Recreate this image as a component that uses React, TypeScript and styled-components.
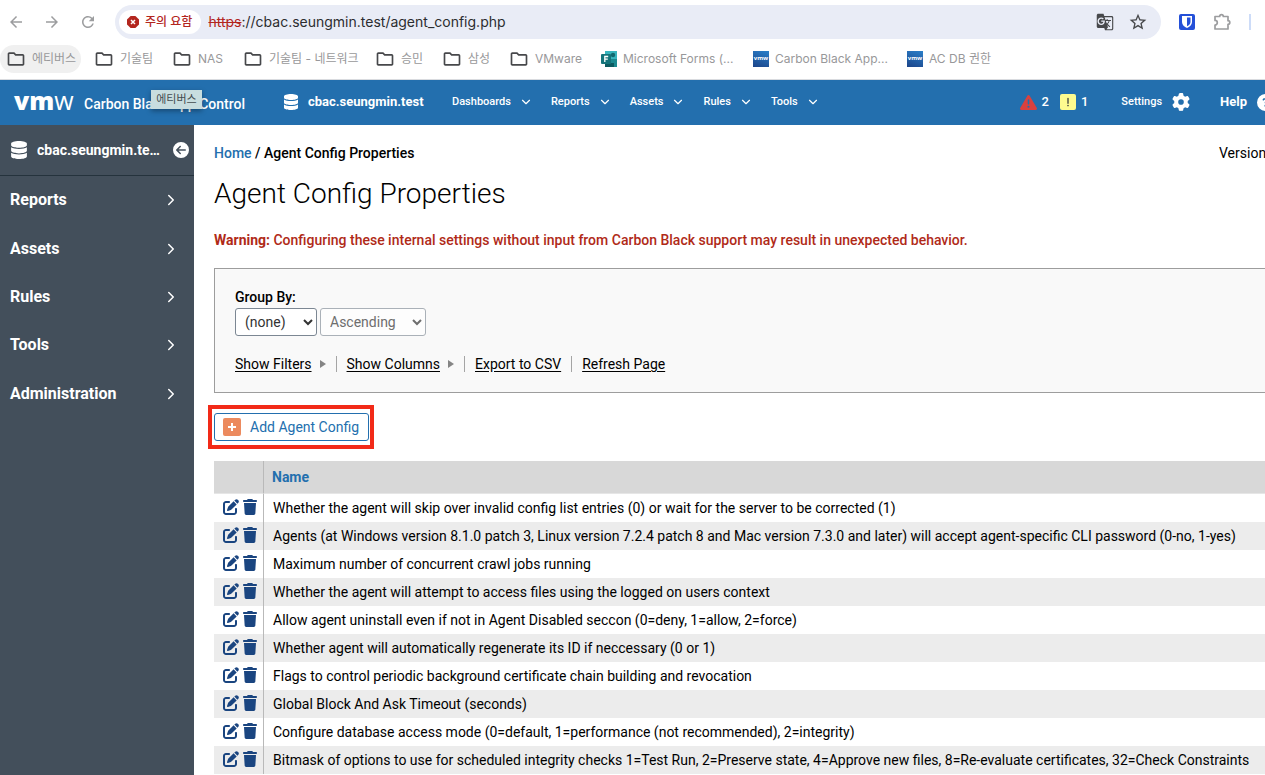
import React from 'react';
import styled, { createGlobalStyle, css } from 'styled-components';
import {
  MdArrowBack, MdArrowForward, MdRefresh, MdGTranslate, MdStarBorder,
  MdOutlineFolder,
} from 'react-icons/md';
import { FaDatabase } from 'react-icons/fa';
import {
  FaTriangleExclamation, FaGear, FaCircleQuestion, FaCircleArrowLeft,
  FaPenToSquare, FaTrash, FaExclamation,
} from 'react-icons/fa6';
import { ChevronDown, ChevronRight } from 'lucide-react';

const uiFont = `Inter, "Noto Sans CJK KR", sans-serif`;
const pageFont = `Roboto, "Noto Sans CJK KR", sans-serif`;

const GlobalStyle = createGlobalStyle`
  * { box-sizing: border-box; }
  html, body, #root { height: 100%; }
  body { margin: 0; background: #fff; color: #000; font: 14px/20px ${pageFont}; overflow: hidden; }
  a { color: inherit; text-decoration: none; }
  button, select, input { font: inherit; }
  svg { display: block; flex: none; }
`;

const Page = styled.div`
  height: 100%;
  display: flex;
  flex-direction: column;
`;

/* ---------- browser chrome ---------- */

const Toolbar = styled.div`
  display: flex;
  align-items: center;
  flex: none;
  height: 44px;
  padding: 0 14px 0 7px;
  gap: 18px;
  color: #9c9d9f;
`;

const ToolButton = styled.button`
  display: flex;
  padding: 0;
  border: 0;
  background: none;
  color: inherit;
`;

const AddressBar = styled.div`
  flex: 1;
  display: flex;
  align-items: center;
  height: 34px;
  padding: 0 13px 0 4px;
  border-radius: 17px;
  background: #e9ecf6;
  color: #47484b;
`;

const SecurityChip = styled.button`
  display: flex;
  align-items: center;
  gap: 6px;
  height: 24px;
  padding: 0 9px 0 8px;
  border: 0;
  border-radius: 12px;
  background: #fff;
  color: #b3261e;
  font: 500 12px/24px ${uiFont};
`;

const UrlField = styled.div`
  flex: 1;
  margin-left: 7px;
  color: #2c2d30;
  font: 14px/20px ${uiFont};
  s { color: #b3261e; }
`;

const AddressActions = styled.div`
  display: flex;
  align-items: center;
  gap: 14px;
`;

const ToolDivider = styled.span`
  width: 2px;
  height: 16px;
  background: #cddcf8;
`;

const BookmarkBar = styled.nav`
  display: flex;
  flex: none;
  height: 36px;
  padding-top: 1px;
  border-bottom: 1px solid #d9dbdf;
`;

const Bookmark = styled.a<{ $active?: boolean; $width: number }>`
  display: flex;
  align-items: center;
  flex: none;
  gap: 6px;
  width: ${p => p.$width}px;
  height: 28px;
  margin-right: 7px;
  padding-left: 6px;
  border-radius: 14px;
  white-space: nowrap;
  color: #98989a;
  font: 12px/28px ${uiFont};
  background: ${p => (p.$active ? '#f0f0f0' : 'none')};
  svg { color: #47484b; }
`;

const VmwTile = styled.span`
  width: 16px;
  height: 16px;
  flex: none;
  background: linear-gradient(200deg, #2a7fc9, #1c4489);
  color: #fff;
  font: 700 6px/15px "Open Sans", sans-serif;
  text-align: center;
`;

/* ---------- application header ---------- */

const Header = styled.header`
  position: relative;
  display: flex;
  align-items: center;
  height: 45px;
  flex: none;
  padding: 0 0 1px 14px;
  background: #236fae;
  color: #fff;
  white-space: nowrap;
`;

const Logo = styled.span`
  width: 70px;
  padding-bottom: 4px;
  font: 800 25px/30px "Open Sans", sans-serif;
  span { font-weight: 400; }
`;

const Product = styled.span`
  width: 199px;
  padding-top: 4px;
  font-weight: 500;
`;

const Tooltip = styled.div`
  position: absolute;
  left: 151px;
  top: 10px;
  width: 51px;
  height: 19px;
  background: #c8dddf;
  box-shadow: 0 2px 5px rgba(0, 0, 0, 0.35);
  color: #444c4f;
  font: 11px/18px ${uiFont};
  text-align: center;
`;

const Server = styled.span`
  display: flex;
  align-items: center;
  gap: 9px;
  width: 169px;
  font-size: 13px;
  font-weight: 700;
`;

const MainNav = styled.nav`
  display: flex;
  flex: 1;
  gap: 18px;
`;

const NavLink = styled.a`
  display: flex;
  align-items: center;
  gap: 8px;
  font-size: 11px;
  font-weight: 500;
`;

const Alerts = styled.div`
  display: flex;
  align-items: center;
  gap: 5px;
  font-weight: 500;
  font-size: 13px;
`;

const Notice = styled.span`
  display: flex;
  align-items: center;
  justify-content: center;
  width: 16px;
  height: 16px;
  margin-left: 6px;
  border-radius: 2px;
  background: #fdfb8f;
  color: #34383c;
`;

const Settings = styled.a`
  display: flex;
  align-items: center;
  gap: 10px;
  margin-left: 33px;
  font-size: 11px;
  font-weight: 500;
`;

const Help = styled.a`
  display: flex;
  align-items: center;
  gap: 10px;
  margin: 0 -9px 0 30px;
  font-size: 13px;
  font-weight: 700;
`;

/* ---------- body ---------- */

const Body = styled.div`
  flex: 1;
  min-height: 0;
  display: flex;
`;

const Sidebar = styled.aside`
  flex: none;
  width: 194px;
  background: #434f5b;
  color: #fff;
`;

const SideHead = styled.div`
  display: flex;
  align-items: center;
  gap: 9px;
  height: 51px;
  padding: 0 5px 1px 10px;
  border-bottom: 1px solid #25333d;
  font-weight: 700;
`;

const SideName = styled.span`
  flex: 1;
  min-width: 0;
  margin-right: 4px;
  overflow: hidden;
  text-overflow: ellipsis;
  white-space: nowrap;
`;

const SideMenu = styled.nav`
  display: grid;
  grid-template-rows: repeat(5, 1fr);
  height: 242px;
`;

const SideLink = styled.a`
  display: flex;
  align-items: center;
  justify-content: space-between;
  padding: 0 14px 0 10px;
  font-size: 16px;
  font-weight: 700;
`;

const Content = styled.main`
  flex: 1;
  min-width: 0;
  padding: 18px 0 0 20px;
  overflow: hidden;
`;

const Crumbs = styled.div`
  display: flex;
  justify-content: space-between;
  font-weight: 500;
  a { color: #236fae; }
`;

const Version = styled.span`
  width: 46px;
  font-weight: 400;
  white-space: nowrap;
`;

const Title = styled.h1`
  margin: 13px 0 0;
  font-size: 28px;
  line-height: 36px;
  font-weight: 300;
`;

const Warning = styled.p`
  margin: 18px 0;
  color: #b02a18;
  font-weight: 500;
  b { font-weight: 700; }
`;

const Filters = styled.section`
  height: 125px;
  padding: 18px 20px 0;
  border: 1px solid #9d9d9d;
  border-right: 0;
  background: #f9f9f9;
`;

const GroupLabel = styled.label`
  display: block;
  padding-bottom: 1px;
  font-weight: 500;
`;

const SelectRow = styled.div`
  display: flex;
  gap: 3px;
`;

const Select = styled.select<{ $width: number }>`
  width: ${p => p.$width}px;
  height: 28px;
  padding: 0 0 0 5px;
  border: 1px solid #7c8793;
  border-radius: 3px;
  background: #fff;
  color: #333;
  &:disabled { opacity: 1; color: #6e6e6e; border-color: #aab1b8; background: #fdfdfd; }
`;

const Actions = styled.div`
  display: flex;
  align-items: center;
  margin-top: 18px;
  a + a::before {
    content: '';
    width: 1px;
    height: 16px;
    margin: 0 10px;
    background: #a5a5a5;
  }
`;

const ActionLink = styled.a<{ $expand?: boolean }>`
  display: flex;
  align-items: center;
  span { text-decoration: underline; text-underline-offset: 2px; }
  ${p => p.$expand && css`
    &::after {
      content: '';
      margin-left: 8px;
      border: 4px solid transparent;
      border-left: 6px solid #858585;
      border-right: 0;
    }
  `}
`;

const Highlight = styled.div`
  width: max-content;
  margin: 12px 0 12px -6px;
  padding: 4px 1px 4px 2px;
  border: 4px solid #f22a18;
`;

const AddButton = styled.button`
  display: flex;
  align-items: center;
  gap: 9px;
  height: 28px;
  padding: 0 9px 0 8px;
  border: 1px solid #236fae;
  border-radius: 3px;
  background: #fff;
  color: #236fae;
`;

const Table = styled.table`
  width: 100%;
  border-collapse: separate;
  border-spacing: 0;
  th, td { padding: 0 0 0 9px; text-align: left; white-space: nowrap; }
  th:first-child, td:first-child { width: 50px; border-right: 1px solid #b9b9b9; }
  th { height: 33px; padding-left: 8px; background: #d8d8d8; border-bottom: 1px solid #e6e6e6; color: #236fae; font-weight: 700; }
  td { height: 28px; }
  tbody tr:nth-child(even) { background: #ececec; }
`;

const RowTools = styled.div`
  display: flex;
  align-items: center;
  gap: 3px;
  padding-bottom: 2px;
`;

const RowButton = styled.button`
  display: flex;
  padding: 0;
  border: 0;
  background: none;
  color: #1a4580;
`;

const PlusIcon = () => (
  <svg width="18" height="18" viewBox="0 0 18 18">
    <rect width="18" height="18" rx="2" fill="#ec8a5e" />
    <path d="M9 5v8M5 9h8" stroke="#fff" strokeWidth="2" />
  </svg>
);

const FormsIcon = () => (
  <svg width="16" height="16" viewBox="0 0 16 16">
    <path fill="#37b5bd" d="M4 0h12v9H4z" />
    <path fill="#1b8a90" d="M10 8h6v8h-6z" />
    <path fill="#0c5a60" d="M4 12h9v4H4z" />
    <circle cx="12" cy="4" r="2.2" fill="#10696f" />
    <rect y="3" width="10" height="10" rx="1" fill="#14747a" />
    <path d="M3.8 11V5.5h3.4M3.8 8.2h3" stroke="#fff" strokeWidth="1.3" fill="none" />
  </svg>
);

const DangerIcon = () => (
  <svg width="12" height="12" viewBox="0 0 12 12">
    <path fill="#b3261e" d="M3.6 0h4.8L12 3.6v4.8L8.4 12H3.6L0 8.4V3.6z" />
    <path d="M4 4l4 4M8 4l-4 4" stroke="#fff" strokeWidth="1.5" />
  </svg>
);

const ShieldIcon = () => (
  <svg width="16" height="16" viewBox="0 0 16 16">
    <rect width="16" height="16" rx="2" fill="#2450d8" />
    <path fill="#fff" d="M3 2h10v6c0 3-2.4 4.8-5 6-2.600-1.200-5-3-5-6z" />
    <path fill="#2450d8" d="M8 3.500h3.500V8c0 2-1.500 3.300-3.500 4.300z" />
  </svg>
);

const PuzzleIcon = () => (
  <svg width="18" height="18" viewBox="0 0 18 18" fill="none" stroke="#9c9d9f" strokeWidth="1.7" strokeLinejoin="round">
    <path d="M2 3.500h4.700a1.800 1.800 0 0 1 3.600 0H15V7.700a1.800 1.800 0 0 1 0 3.600V16H2v-4a2.300 2.300 0 0 0 0-4.600z" />
  </svg>
);

type Mark = { label: string; width: number; icon?: 'forms' | 'vmw'; active?: boolean };

const bookmarks: Mark[] = [
  { label: '에티버스', width: 81, active: true },
  { label: '기술팀', width: 71 },
  { label: 'NAS', width: 64 },
  { label: '기술팀 - 네트워크', width: 125 },
  { label: '승민', width: 60 },
  { label: '삼성', width: 60 },
  { label: 'VMware', width: 85 },
  { label: 'Microsoft Forms (...', width: 145, icon: 'forms' },
  { label: 'Carbon Black App...', width: 147, icon: 'vmw' },
  { label: 'AC DB 권한', width: 96, icon: 'vmw' },
];

const topics = ['Dashboards', 'Reports', 'Assets', 'Rules', 'Tools'];
const sections = ['Reports', 'Assets', 'Rules', 'Tools', 'Administration'];

const configs = [
  'Whether the agent will skip over invalid config list entries (0) or wait for the server to be corrected (1)',
  'Agents (at Windows version 8.1.0 patch 3, Linux version 7.2.4 patch 8 and Mac version 7.3.0 and later) will accept agent-specific CLI password (0-no, 1-yes)',
  'Maximum number of concurrent crawl jobs running',
  'Whether the agent will attempt to access files using the logged on users context',
  'Allow agent uninstall even if not in Agent Disabled seccon (0=deny, 1=allow, 2=force)',
  'Whether agent will automatically regenerate its ID if neccessary (0 or 1)',
  'Flags to control periodic background certificate chain building and revocation',
  'Global Block And Ask Timeout (seconds)',
  'Configure database access mode (0=default, 1=performance (not recommended), 2=integrity)',
  'Bitmask of options to use for scheduled integrity checks 1=Test Run, 2=Preserve state, 4=Approve new files, 8=Re-evaluate certificates, 32=Check Constraints',
];

function BookmarkIcon({ kind }: { kind?: Mark['icon'] }) {
  if (kind === 'forms') return <FormsIcon />;
  if (kind === 'vmw') return <VmwTile>vmw</VmwTile>;
  return <MdOutlineFolder size={20} />;
}

export default function App() {
  return (
    <Page>
      <GlobalStyle />
      <Toolbar>
        <ToolButton aria-label="Back"><MdArrowBack size={18} /></ToolButton>
        <ToolButton aria-label="Forward"><MdArrowForward size={18} /></ToolButton>
        <ToolButton aria-label="Reload"><MdRefresh size={18} /></ToolButton>
        <AddressBar>
          <SecurityChip><DangerIcon />주의 요함</SecurityChip>
          <UrlField><s>https</s>://cbac.seungmin.test/agent_config.php</UrlField>
          <AddressActions>
            <ToolButton aria-label="Translate"><MdGTranslate size={18} /></ToolButton>
            <ToolButton aria-label="Bookmark"><MdStarBorder size={20} /></ToolButton>
          </AddressActions>
        </AddressBar>
        <ToolButton aria-label="Password manager"><ShieldIcon /></ToolButton>
        <ToolButton aria-label="Extensions"><PuzzleIcon /></ToolButton>
        <ToolDivider />
      </Toolbar>
      <BookmarkBar>
        {bookmarks.map(b => (
          <Bookmark key={b.label} href="#" $active={b.active} $width={b.width}>
            <BookmarkIcon kind={b.icon} />{b.label}
          </Bookmark>
        ))}
      </BookmarkBar>

      <Header>
        <Logo>vm<span>w</span></Logo>
        <Product>Carbon Black App Control</Product>
        <Server><FaDatabase size={16} />cbac.seungmin.test</Server>
        <MainNav>
          {topics.map(t => (
            <NavLink key={t} href="#">{t}<ChevronDown size={14} /></NavLink>
          ))}
        </MainNav>
        <Alerts>
          <FaTriangleExclamation size={17} color="#d9413f" />2
          <Notice><FaExclamation size={10} /></Notice>1
        </Alerts>
        <Settings href="#">Settings<FaGear size={18} /></Settings>
        <Help href="#">Help<FaCircleQuestion size={17} /></Help>
        <Tooltip role="tooltip">에티버스</Tooltip>
      </Header>

      <Body>
        <Sidebar>
          <SideHead>
            <FaDatabase size={18} />
            <SideName>cbac.seungmin.test</SideName>
            <ToolButton aria-label="Collapse menu"><FaCircleArrowLeft size={16} /></ToolButton>
          </SideHead>
          <SideMenu>
            {sections.map(s => (
              <SideLink key={s} href="#">{s}<ChevronRight size={18} /></SideLink>
            ))}
          </SideMenu>
        </Sidebar>
        <Content>
          <Crumbs>
            <span><a href="#">Home</a> / Agent Config Properties</span>
            <Version>Version</Version>
          </Crumbs>
          <Title>Agent Config Properties</Title>
          <Warning><b>Warning:</b> Configuring these internal settings without input from Carbon Black support may result in unexpected behavior.</Warning>
          <Filters>
            <GroupLabel htmlFor="group">Group By:</GroupLabel>
            <SelectRow>
              <Select id="group" $width={82}><option>(none)</option></Select>
              <Select aria-label="Sort order" $width={106} disabled><option>Ascending</option></Select>
            </SelectRow>
            <Actions>
              <ActionLink href="#" $expand><span>Show Filters</span></ActionLink>
              <ActionLink href="#" $expand><span>Show Columns</span></ActionLink>
              <ActionLink href="#"><span>Export to CSV</span></ActionLink>
              <ActionLink href="#"><span>Refresh Page</span></ActionLink>
            </Actions>
          </Filters>
          <Highlight>
            <AddButton><PlusIcon />Add Agent Config</AddButton>
          </Highlight>
          <Table>
            <thead>
              <tr><th aria-label="Actions" /><th>Name</th></tr>
            </thead>
            <tbody>
              {configs.map(c => (
                <tr key={c}>
                  <td>
                    <RowTools>
                      <RowButton aria-label="Edit"><FaPenToSquare size={16} /></RowButton>
                      <RowButton aria-label="Delete"><FaTrash size={16} /></RowButton>
                    </RowTools>
                  </td>
                  <td>{c}</td>
                </tr>
              ))}
            </tbody>
          </Table>
        </Content>
      </Body>
    </Page>
  );
}
